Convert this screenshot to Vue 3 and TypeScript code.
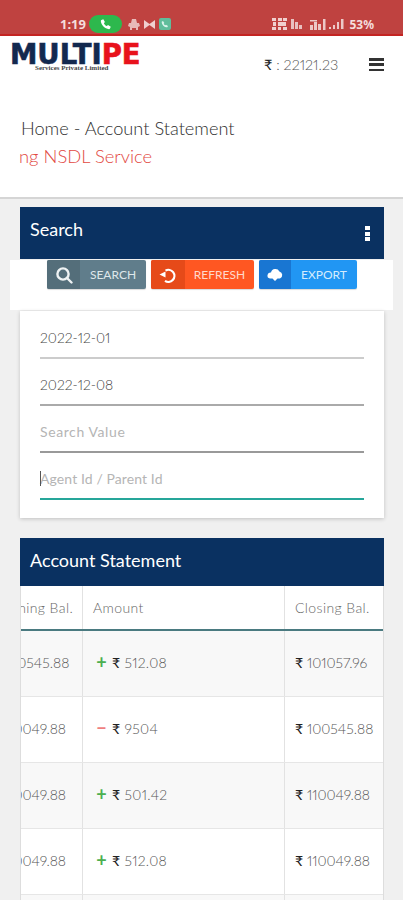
<script setup lang="ts">
interface Row { open: string; sign: '+' | '−'; amount: string; close: string }
const rows: Row[] = [
  { open: '100545.88', sign: '+', amount: '512.08', close: '101057.96' },
  { open: '110049.88', sign: '−', amount: '9504', close: '100545.88' },
  { open: '110049.88', sign: '+', amount: '501.42', close: '110049.88' },
  { open: '110049.88', sign: '+', amount: '512.08', close: '110049.88' },
  { open: '110049.88', sign: '+', amount: '512.08', close: '110049.88' },
]
</script>

<template>
  <div class="page">
    <div class="status">
      <span class="time">1:19</span>
      <span class="pill">
        <svg width="12" height="12" viewBox="0 0 24 24"><path fill="#fff" d="M6.6 2.5 9.8 8l-2 2.3c1.200 2.600 3.300 4.700 5.900 5.900l2.300-2 5.500 3.200-1.500 3.800c-.4.8-1.200 1.300-2.100 1.200C9.500 21.600 2.500 14.500 1.600 6.100c-.1-.9.4-1.700 1.200-2.100z"/></svg>
      </span>
      <svg class="ni" width="12" height="11" viewBox="0 0 12 11"><path fill="#e8b9b8" d="M4 0h4l1 4h2l1 3-2 1v3H8V9H4v2H2V8L0 7l1-3h2z"/></svg>
      <svg class="ni" width="11" height="9" viewBox="0 0 11 9"><path fill="#f0cfce" d="M0 0l5.500 4L11 0v9L5.500 5 0 9z"/></svg>
      <span class="wa"><svg width="8" height="8" viewBox="0 0 24 24"><path fill="#d8f3ea" d="M6 3l4 6-2 2c1 2 3 4 5 5l2-2 6 4-2 4C10 22 2 14 2 5z"/></svg></span>
      <span class="spacer"></span>
      <svg width="16" height="13" viewBox="0 0 16 13" fill="#f0cfce"><rect x="0" y="0" width="4" height="3"/><rect x="6" y="0" width="4" height="3"/><rect x="11" y="0" width="4" height="3"/><rect x="1" y="4" width="3" height="4"/><rect x="6" y="4" width="8" height="4"/><rect x="0" y="9" width="4" height="3"/><rect x="6" y="9" width="3" height="3"/><rect x="11" y="9" width="4" height="3"/></svg>
      <svg class="g3" width="11" height="10" viewBox="0 0 11 10" fill="#e8c0bf"><rect x="0" y="0" width="3" height="10"/><rect x="4" y="3" width="3" height="7"/><rect x="8" y="6" width="3" height="4"/></svg>
      <svg class="g6" width="16" height="11" viewBox="0 0 16 11" fill="#ecc8c7"><rect x="0" y="6" width="3" height="5"/><rect x="4" y="3" width="3" height="8"/><rect x="0" y="1" width="7" height="1.500"/><rect x="8" y="5" width="3" height="6"/><rect x="13" y="0" width="2.500" height="11"/></svg>
      <svg class="g3" width="15" height="10" viewBox="0 0 15 10" fill="#ecc8c7"><rect x="0" y="8" width="2" height="2"/><rect x="4" y="6" width="2" height="4"/><rect x="8" y="3" width="2" height="7"/><rect x="12" y="0" width="2.500" height="10"/></svg>
      <span class="batt">53%</span>
    </div>

    <div class="top">
      <div class="bar">
        <div class="logo">
          <div class="brand">MULTI<span>PE</span></div>
          <div class="tag">Services Private Limited</div>
        </div>
        <div class="wallet"><b>₹</b> : 22121.23</div>
        <div class="burger"><i></i><i></i><i></i></div>
      </div>
      <div class="crumb">Home - Account Statement</div>
      <div class="notice"><span>ng NSDL Service</span></div>
    </div>

    <div class="content">
      <section class="panel-head search-head">
        <span>Search</span>
        <span class="kebab"><i></i><i></i><i></i></span>
      </section>

      <div class="tools">
        <button class="btn grey">
          <span class="ic"><svg width="18" height="18" viewBox="0 0 18 18" fill="none" stroke="#eef2f3" stroke-width="2.400"><circle cx="8" cy="8" r="5.600"/><path d="M12 12l4.500 4.500" stroke-linecap="round"/></svg></span>
          <span class="lb">SEARCH</span>
        </button>
        <button class="btn orange">
          <span class="ic"><svg width="18" height="18" viewBox="0 0 18 18" fill="none"><path d="M6.500 4.600A6 6 0 1 1 6 14.800" stroke="#fff" stroke-width="2.200"/><path d="M0.500 8.500 6.500 5.500v6z" fill="#fff"/></svg></span>
          <span class="lb">REFRESH</span>
        </button>
        <button class="btn blue">
          <span class="ic"><svg width="18" height="14" viewBox="0 0 18 14"><path fill="#fff" d="M5 4.500a4.500 4.500 0 0 1 8.400-1A3.700 3.700 0 0 1 14 10.500h-2.500L9 13l-2.500-2.500H4A3 3 0 0 1 5 4.500z"/></svg></span>
          <span class="lb">EXPORT</span>
        </button>
      </div>

      <div class="form">
        <div class="field dark">2022-12-01</div>
        <div class="field dark l2">2022-12-08</div>
        <div class="field ph l3 wide">Search Value</div>
        <div class="field ph focus"><span class="caret"></span>Agent Id / Parent Id</div>
      </div>

      <section class="panel-head state-head">Account Statement</section>

      <div class="table">
        <div class="tr th">
          <div class="td c1"><span class="shift">Opening Bal.</span></div>
          <div class="td c2">Amount</div>
          <div class="td c3">Closing Bal.</div>
        </div>
        <div v-for="(r, i) in rows" :key="i" class="tr" :class="{ alt: i % 2 === 0 }">
          <div class="td c1"><span class="shift num"><b>₹</b> {{ r.open }}</span></div>
          <div class="td c2 amt">
            <span class="sign" :class="r.sign === '+' ? 'plus' : 'minus'">{{ r.sign }}</span>
            <b>₹</b> {{ r.amount }}
          </div>
          <div class="td c3"><b>₹</b> {{ r.close }}</div>
        </div>
      </div>
    </div>
  </div>
</template>

<style>
html, body { margin: 0; background: #f0f0f0; }
</style>

<style scoped>
.page {
  width: 403px;
  height: 900px;
  overflow: hidden;
  background: #f0f0f0;
  font-family: Lato, "Noto Sans", sans-serif;
  font-variant-numeric: proportional-nums;
  color: #555;
}
.status {
  height: 34px;
  padding: 0 29px 0 60px;
  border-bottom: 2px solid #c42422;
  background: #bf4240;
  display: flex;
  align-items: center;
}
.status > * { position: relative; top: 7px; }
.time { font: 700 13px "Noto Sans", sans-serif; color: #f5dddc; width: 29px; }
.pill {
  width: 33px; height: 18px; border-radius: 9px; background: #2db84d;
  display: flex; align-items: center; justify-content: center; margin-right: 6px;
}
.ni { margin-right: 4px; }
.wa {
  width: 12px; height: 12px; border-radius: 2px; background: #5fbd9b;
  display: flex; align-items: center; justify-content: center;
}
.spacer { flex: 1; }
.g3 { margin-left: 3px; }
.g6 { margin-left: 8px; }
.batt { font: 700 12px "Noto Sans", sans-serif; color: #f5dddc; margin-left: 5px; }

.top {
  height: 161px;
  background: #fff;
  border-bottom: 2px solid #d5d5d5;
}
.bar { display: flex; height: 58px; }
.logo { padding: 6px 0 0 10px; width: 131px; }
.brand {
  font: 700 27.500px/25px "DejaVu Sans", sans-serif;
  color: #13294f;
  -webkit-text-stroke: 0.6px currentColor;
  white-space: nowrap;
}
.brand span { color: #e8121c; }
.tag {
  font: 700 7px/7px "Liberation Serif", serif;
  color: #444;
  margin-top: -2px;
  padding-left: 25px;
  white-space: nowrap;
}
.wallet {
  margin-left: 123px;
  padding-top: 20px;
  font-size: 14.400px;
  font-weight: 300;
  line-height: 17px;
  width: 105px;
  white-space: nowrap;
  color: #555;
}
b { font-weight: 400; color: #222; }
.burger {
  margin-top: 22px;
  width: 15px;
  height: 13px;
  display: flex;
  flex-direction: column;
  justify-content: space-between;
}
.burger i { display: block; height: 2.500px; background: #333; }
.crumb {
  padding: 23px 0 0 21px;
  font-size: 18.200px;
  line-height: 22px;
  color: #2e2e2e;
  font-weight: 300;
  white-space: nowrap;
}
.notice {
  padding: 6px 0 0 19px;
  font-size: 18.400px;
  line-height: 22px;
  color: #e2483f;
  font-weight: 300;
  white-space: nowrap;
}
.content { padding: 8px 19px 0 20px; }
.panel-head {
  background: #0a3161;
  color: #fff;
  font-size: 18px;
  padding-left: 10px;
}
.search-head {
  height: 52px;
  padding-top: 11px;
  padding-right: 14px;
  box-sizing: border-box;
  line-height: 22px;
  display: flex;
  justify-content: space-between;
}
.kebab {
  margin-top: 8px;
  width: 5px;
  height: 15px;
  display: flex;
  flex-direction: column;
  justify-content: space-between;
}
.kebab i { display: block; height: 4px; background: #fff; }
.tools {
  margin: 1px -9px 0 -10px;
  height: 50px;
  background: #fff;
  display: flex;
  gap: 5px;
  padding-left: 37px;
  box-sizing: border-box;
  align-items: flex-start;
}
.btn {
  height: 29px;
  border: 0;
  padding: 0;
  border-radius: 2px;
  display: flex;
  align-items: center;
  font: 400 12px Lato, "Noto Sans", sans-serif;
  color: #dfe7ea;
  box-shadow: 0 1px 1px rgba(0,0,0,.15);
}
.ic { height: 100%; display: flex; align-items: center; justify-content: center; border-radius: 2px 0 0 2px; }
.lb { flex: 1; text-align: center; margin-top: -1px; }
.grey { width: 99px; background: #607d8b; }
.grey .ic { width: 33px; background: #546e7a; }
.orange { width: 103px; background: #ff5722; color: #ffd9cc; }
.orange .ic { width: 34px; background: #e64a19; }
.blue { width: 98px; background: #2196f3; color: #d5ecfd; }
.blue .ic { width: 32px; background: #1976d2; }
.form {
  margin-top: 1px;
  height: 207px;
  box-sizing: border-box;
  background: #fff;
  padding: 1px 20px 0;
  box-shadow: 0 1px 4px rgba(0,0,0,.2);
}
.field {
  height: 47px;
  box-sizing: border-box;
  padding-top: 17px;
  line-height: 18px;
  font-size: 14px;
  letter-spacing: .1px;
  border-bottom: 2px solid #ccc;
  position: relative;
}
.dark { color: #444; font-weight: 300; letter-spacing: 0; }
.l2 { border-bottom-color: #aaa; }
.l3 { border-bottom-color: #999; }
.ph { color: #b5b5b5; }
.wide { letter-spacing: .6px; }
.focus { border-bottom-color: #26a69a; }
.caret {
  position: absolute;
  left: 0;
  top: 18px;
  width: 1px;
  height: 15px;
  background: #555;
}
.state-head {
  margin-top: 20px;
  height: 48px;
  line-height: 45px;
}
.table {
  background: #fff;
  border-left: 1px solid #ddd;
  border-right: 1px solid #ddd;
}
.tr {
  display: flex;
  height: 66px;
  font-size: 14px;
  font-weight: 300;
  border-bottom: 1px solid #e6e6e6;
  box-sizing: border-box;
}
.th {
  height: 45px;
  border-bottom: 2px solid #4a7a80;
  color: #666;
  letter-spacing: .4px;
}
.alt { background: #f8f8f8; }
.td {
  display: flex;
  align-items: center;
  white-space: pre;
  box-sizing: border-box;
  overflow: hidden;
  padding-bottom: 3px;
}
.th .td { padding-bottom: 0; }
.c1 { width: 62px; border-right: 1px solid #e2e2e2; }
.c2 { width: 202px; border-right: 1px solid #e2e2e2; padding-left: 10px; white-space: pre-wrap; }
.amt { letter-spacing: .3px; }
.c3 { flex: 1; padding-left: 10px; }
.shift { margin-left: -30px; flex: none; }
.num { margin-left: -30px; }
.sign { width: 17px; margin-right: 2px; text-align: center; font-size: 18px; font-weight: 700; line-height: 14px; }
.plus { color: #4caf50; }
.minus { color: #ef7f7f; }
</style>
